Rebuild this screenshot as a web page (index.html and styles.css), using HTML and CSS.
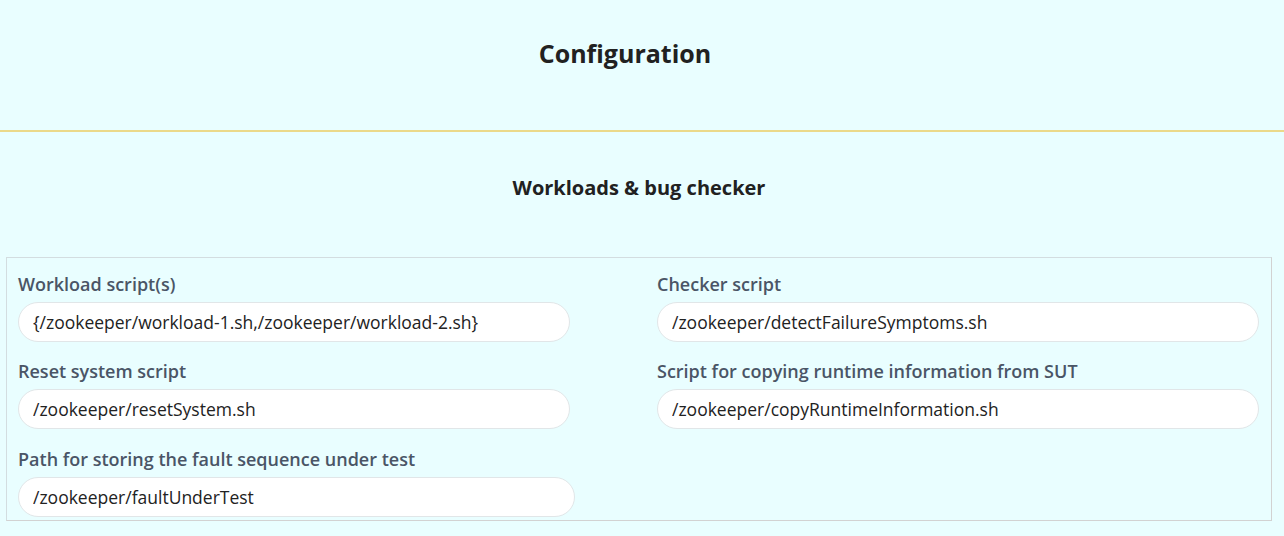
FILE: index.html
```html
<!DOCTYPE html>
<html lang="en">
<head>
<meta charset="utf-8">
<title>Configuration</title>
<link rel="stylesheet" href="styles.css">
</head>
<body>
<header class="page-header">
  <h1 class="page-title">Configuration</h1>
</header>
<main class="content">
  <h2 class="section-title">Workloads &amp; bug checker</h2>
  <div class="form-box">
    <div class="field">
      <label class="field-label">Workload script(s)</label>
      <input class="field-input input-narrow" type="text" value="{/zookeeper/workload-1.sh,/zookeeper/workload-2.sh}">
    </div>
    <div class="field">
      <label class="field-label">Checker script</label>
      <input class="field-input" type="text" value="/zookeeper/detectFailureSymptoms.sh">
    </div>
    <div class="field">
      <label class="field-label">Reset system script</label>
      <input class="field-input input-narrow" type="text" value="/zookeeper/resetSystem.sh">
    </div>
    <div class="field">
      <label class="field-label">Script for copying runtime information from SUT</label>
      <input class="field-input" type="text" value="/zookeeper/copyRuntimeInformation.sh">
    </div>
    <div class="field field-last">
      <label class="field-label">Path for storing the fault sequence under test</label>
      <input class="field-input input-mid" type="text" value="/zookeeper/faultUnderTest">
    </div>
  </div>
</main>
</body>
</html>
```

FILE: styles.css
```css
* { box-sizing: border-box; }

html, body {
  margin: 0;
  padding: 0;
  background: #e9feff;
  font-family: "Open Sans", "Noto Sans", sans-serif;
  color: #1f1f1f;
}

.page-header {
  height: 132px;
  border-bottom: 2px solid #ebd98a;
  display: flex;
  justify-content: center;
  padding-top: 35px;
  padding-right: 34px;
}

.page-title {
  margin: 0;
  font-size: 25px;
  font-weight: 700;
  line-height: 36px;
  color: #212121;
}

.content {
  padding: 0 12px 0 6px;
}

.section-title {
  margin: 0;
  padding-top: 42px;
  height: 125px;
  text-align: center;
  font-size: 20px;
  font-weight: 700;
  line-height: 28px;
  color: #212121;
}

.form-box {
  border: 1px solid #d3dde0;
  border-right-color: #d2d2d2;
  border-bottom-color: #d2d2d2;
  padding: 14px 11px 2px 11px;
  display: grid;
  grid-template-columns: 602px 602px;
  column-gap: 37px;
  row-gap: 17px;
}

.field {
  display: flex;
  flex-direction: column;
  gap: 6px;
}

.field-last {
  margin-top: 1px;
  padding-bottom: 1px;
}

.field-label {
  font-size: 18px;
  font-weight: 600;
  line-height: 24px;
  color: #4a5566;
}

.field-input {
  height: 40px;
  width: 100%;
  border: 1px solid #e1e6e8;
  border-radius: 20px;
  background: #ffffff;
  padding: 0 14px;
  font-family: "Open Sans", "Noto Sans", sans-serif;
  font-size: 17.5px;
  color: #222222;
  outline: none;
}

.input-narrow { width: 552px; }
.input-mid { width: 557px; }
```
